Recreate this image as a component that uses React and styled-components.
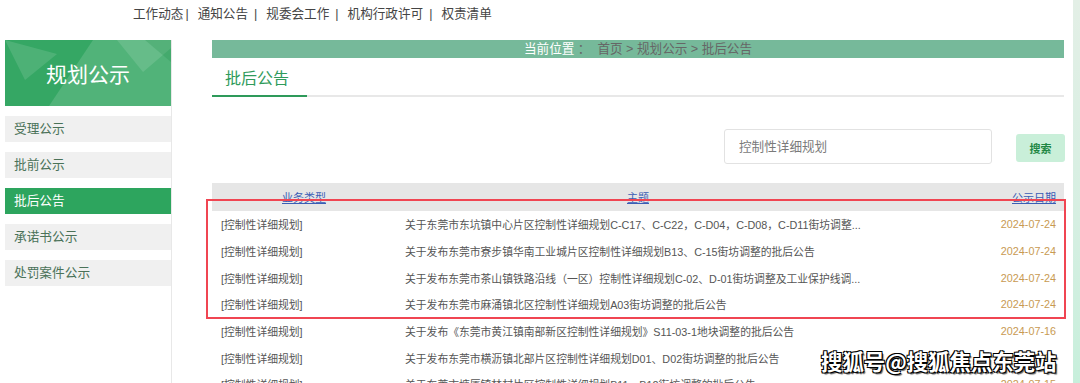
import styled, { createGlobalStyle } from "styled-components";

const GlobalStyle = createGlobalStyle`
  html, body {
    margin: 0;
    padding: 0;
    background: #fff;
  }
  body {
    font-family: "Liberation Sans", "Noto Sans CJK SC", sans-serif;
    color: #444;
  }
`;

const Page = styled.div`
  position: relative;
  display: grid;
  grid-template-columns: 1073px 1fr;
  min-height: 383px;
  overflow: hidden;
`;

const Edge = styled.div`
  background: linear-gradient(180deg, #e3efe6 0%, #d6efe2 55%, #c6efdb 100%);
`;

const Frame = styled.div`
  padding-left: 5px;
`;

const TopNav = styled.nav`
  height: 40px;
  box-sizing: border-box;
  padding: 5px 0 0 128px;
  font-size: 12.6px;
  line-height: 18px;
  color: #444;
  white-space: nowrap;
`;

const NavLink = styled.span``;

const Sep = styled.span`
  margin: 0 ${(p) => (p.$tight ? "9px" : "9px")} 0 ${(p) => (p.$tight ? "2px" : "6px")};
`;

const Body = styled.div`
  display: flex;
  gap: 40px;
`;

const Sidebar = styled.aside`
  width: 166px;
  border-right: 1px solid #e8e8e8;
  padding-bottom: 100px;
`;

const Banner = styled.div`
  position: relative;
  height: 66px;
  background: #35a764;
  display: flex;
  align-items: center;
  justify-content: center;
  overflow: hidden;
  margin-bottom: 10px;
`;

const BannerArt = styled.svg`
  position: absolute;
  inset: 0;
`;

const BannerTitle = styled.h2`
  position: relative;
  margin: 0;
  font-size: 21px;
  font-weight: 400;
  color: #fff;
  letter-spacing: 0;
`;

const Menu = styled.ul`
  list-style: none;
  margin: 0;
  padding: 0;
`;

const MenuItem = styled.li`
  height: 26px;
  line-height: 26px;
  margin-bottom: 10px;
  padding-left: 9px;
  font-size: 12.7px;
  background: ${(p) => (p.$active ? "#2da55e" : "#f0f0f0")};
  color: ${(p) => (p.$active ? "#fff" : "#4a7258")};
`;

const Main = styled.main`
  width: 852px;
`;

const Crumbs = styled.div`
  height: 18px;
  line-height: 18px;
  background: #76b99a;
  text-align: center;
  font-size: 12.6px;
  color: #666;
  white-space: nowrap;
`;

const CrumbLabel = styled.span`
  color: #fff;
`;

const TabBar = styled.div`
  display: flex;
  height: 39px;
  box-sizing: border-box;
  border-bottom: 2px solid #e8e8e8;
`;

const Tab = styled.div`
  width: 95px;
  box-sizing: border-box;
  padding-left: 13px;
  margin-bottom: -2px;
  border-bottom: 2px solid #2e9a5a;
  display: flex;
  align-items: center;
  font-size: 16px;
  color: #2f9b5b;
`;

const SearchRow = styled.div`
  display: flex;
  justify-content: flex-end;
  align-items: center;
  gap: 24px;
  margin-top: 32px;
  margin-right: -1px;
`;

const SearchInput = styled.input`
  width: 268px;
  height: 35px;
  box-sizing: border-box;
  border: 1px solid #e2e2e2;
  border-radius: 3px;
  padding: 0 14px;
  font-family: inherit;
  font-size: 12.6px;
  color: #666;
  outline: none;
  &::placeholder {
    color: #7a7a7a;
  }
`;

const SearchButton = styled.button`
  width: 49px;
  height: 28px;
  border: 0;
  border-radius: 3px;
  background: #c9efd9;
  color: #1f8744;
  font-family: inherit;
  font-size: 11px;
  font-weight: 700;
  padding: 0;
  margin-top: 3px;
`;

const Table = styled.div`
  position: relative;
  margin-top: 19px;
`;

const HeadRow = styled.div`
  display: grid;
  grid-template-columns: 184px 484px 1fr;
  height: 28px;
  align-items: center;
  background: #e6e6e6;
  font-size: 11px;
`;

const HeadCell = styled.a`
  color: #3a5db5;
  text-decoration: underline;
  text-align: ${(p) => p.$align || "center"};
  padding-right: ${(p) => (p.$align === "right" ? "8px" : "0")};
`;

const Row = styled.div`
  display: grid;
  grid-template-columns: 184px 484px 1fr;
  height: 26.7px;
  align-items: center;
  font-size: 10.8px;
  color: #555;
  white-space: nowrap;
`;

const Cell = styled.div`
  padding-left: 9px;
  overflow: hidden;
`;

const DateCell = styled.div`
  text-align: right;
  padding-right: 8px;
  color: #c89a52;
`;

const Highlight = styled.div`
  position: absolute;
  left: -6px;
  top: 16px;
  width: 860px;
  height: 120px;
  box-sizing: border-box;
  border: 2px solid #f04552;
  pointer-events: none;
`;

const Watermark = styled.div`
  position: absolute;
  left: 821px;
  top: 345px;
  font-family: "Noto Sans CJK SC", sans-serif;
  font-size: 21.4px;
  font-weight: 700;
  color: #fff;
  white-space: nowrap;
  text-shadow: 1px 1px 0 #000, -1px -1px 0 #000, 1px -1px 0 #000,
    -1px 1px 0 #000, 2px 2px 1px rgba(0, 0, 0, 0.6);
`;

const navItems = ["工作动态", "通知公告", "规委会工作", "机构行政许可", "权责清单"];
const menu = ["受理公示", "批前公示", "批后公告", "承诺书公示", "处罚案件公示"];

const rows = [
  ["关于东莞市东坑镇中心片区控制性详细规划C-C17、C-C22，C-D04，C-D08，C-D11街坊调整...", "2024-07-24"],
  ["关于发布东莞市寮步镇华南工业城片区控制性详细规划B13、C-15街坊调整的批后公告", "2024-07-24"],
  ["关于发布东莞市茶山镇铁路沿线（一区）控制性详细规划C-02、D-01街坊调整及工业保护线调...", "2024-07-24"],
  ["关于发布东莞市麻涌镇北区控制性详细规划A03街坊调整的批后公告", "2024-07-24"],
  ["关于发布《东莞市黄江镇南部新区控制性详细规划》S11-03-1地块调整的批后公告", "2024-07-16"],
  ["关于发布东莞市横沥镇北部片区控制性详细规划D01、D02街坊调整的批后公告", "2024-07-15"],
  ["关于东莞市塘厦镇林村片区控制性详细规划B11、B12街坊调整的批后公告", "2024-07-15"],
];

export default function App() {
  return (
    <Page>
      <GlobalStyle />
      <Frame>
        <TopNav>
          {navItems.map((item, i) => (
            <span key={item}>
              <NavLink>{item}</NavLink>
              {i < navItems.length - 1 && <Sep $tight={i === 0}>|</Sep>}
            </span>
          ))}
        </TopNav>
        <Body>
          <Sidebar>
            <Banner>
              <BannerArt viewBox="0 0 166 66" preserveAspectRatio="none">
                <polygon points="0,0 52,14 20,40" fill="#ffffff" opacity="0.12" />
                <polygon points="44,66 88,0 166,0 166,66" fill="#ffffff" opacity="0.14" />
                <polygon points="112,0 138,32 166,8 166,0" fill="#ffffff" opacity="0.12" />
                <polygon points="140,0 166,0 166,22" fill="#1f8f4c" opacity="0.25" />
              </BannerArt>
              <BannerTitle>规划公示</BannerTitle>
            </Banner>
            <Menu>
              {menu.map((m) => (
                <MenuItem key={m} $active={m === "批后公告"}>
                  {m}
                </MenuItem>
              ))}
            </Menu>
          </Sidebar>
          <Main>
            <Crumbs>
              <CrumbLabel>当前位置</CrumbLabel> ：&nbsp; 首页 &gt; 规划公示 &gt; 批后公告
            </Crumbs>
            <TabBar>
              <Tab>批后公告</Tab>
            </TabBar>
            <SearchRow>
              <SearchInput placeholder="控制性详细规划" />
              <SearchButton>搜索</SearchButton>
            </SearchRow>
            <Table>
              <HeadRow>
                <HeadCell>业务类型</HeadCell>
                <HeadCell>主题</HeadCell>
                <HeadCell $align="right">公示日期</HeadCell>
              </HeadRow>
              {rows.map(([title, date], i) => (
                <Row key={i}>
                  <Cell>[控制性详细规划]</Cell>
                  <Cell>{title}</Cell>
                  <DateCell>{date}</DateCell>
                </Row>
              ))}
              <Highlight />
            </Table>
          </Main>
        </Body>
      </Frame>
      <Edge />
      <Watermark>搜狐号@搜狐焦点东莞站</Watermark>
    </Page>
  );
}
